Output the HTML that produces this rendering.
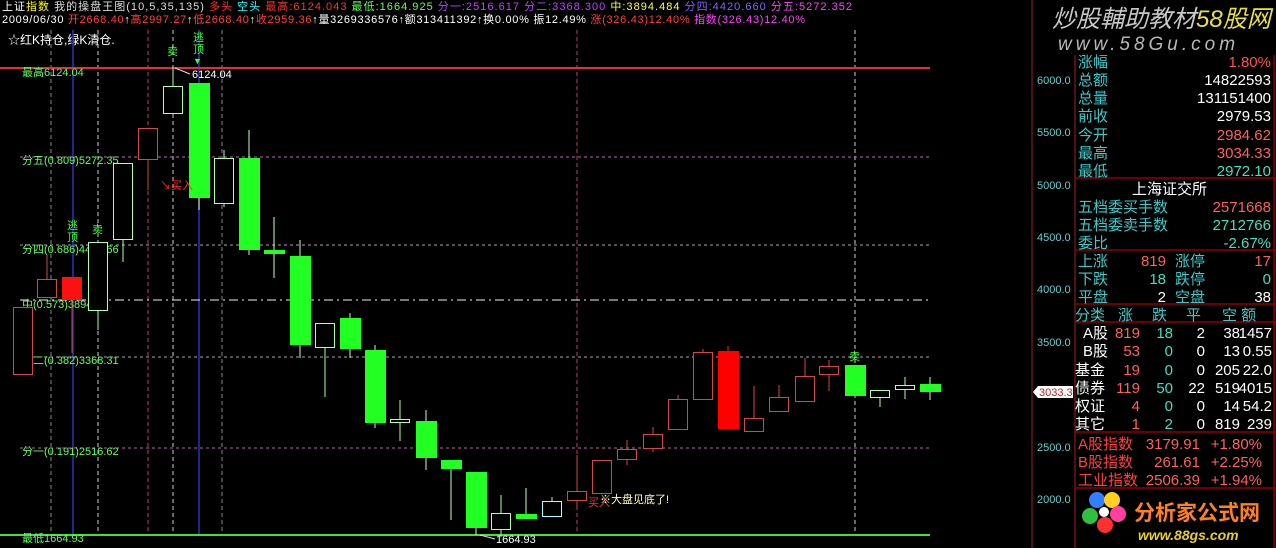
<!DOCTYPE html>
<html><head><meta charset="utf-8"><style>
html,body{margin:0;padding:0;background:#000;width:1276px;height:548px;overflow:hidden}
svg{display:block}
text{font-family:"Liberation Sans","Noto Sans CJK SC",sans-serif}
.s{font-size:11px}
.p{font-size:15px}
</style></head><body>
<svg width="1276" height="548" xmlns="http://www.w3.org/2000/svg">
<rect width="1276" height="548" fill="#000"/>
<text class="s" x="2" y="10" fill="#fff" textLength="850" lengthAdjust="spacing">上证<tspan fill="#ffff00">指数</tspan> <tspan fill="#ddd">我的操盘王图(10,5,35,135)</tspan> <tspan fill="#ff3030">多头</tspan> <tspan fill="#30ffff">空头</tspan> <tspan fill="#ff3030">最高:6124.043</tspan> <tspan fill="#60ff60">最低:1664.925</tspan> <tspan fill="#c040ff">分一:2516.617</tspan> <tspan fill="#c040ff">分二:3368.300</tspan> <tspan fill="#ffff40">中:3894.484</tspan> <tspan fill="#8060ff">分四:4420.660</tspan> <tspan fill="#ff40ff">分五:5272.352</tspan></text>
<text class="s" x="2" y="23" fill="#fff" textLength="803" lengthAdjust="spacing">2009/06/30 <tspan fill="#ff4040">开2668.40</tspan>↑<tspan fill="#ff4040">高2997.27</tspan>↑<tspan fill="#ff4040">低2668.40</tspan>↑<tspan fill="#ff4040">收2959.36</tspan>↑量3269336576↑额313411392↑换0.00% 振12.49% <tspan fill="#ff4040">涨(326.43)12.40%</tspan> <tspan fill="#ff40ff">指数(326.43)12.40%</tspan></text>
<text x="8" y="44" fill="#fff" font-size="12">☆红K持仓,绿K清仓.</text>

<line x1="73" y1="30" x2="73" y2="535" stroke="#3030c0" stroke-width="1.5"/>
<line x1="199" y1="30" x2="199" y2="535" stroke="#3030c0" stroke-width="1.5"/>
<g stroke-dasharray="4,3" stroke-width="1">
<line x1="51" y1="30" x2="51" y2="535" stroke="#888"/>
<line x1="98" y1="30" x2="98" y2="535" stroke="#ccc"/>
<line x1="148" y1="30" x2="148" y2="535" stroke="#c04060"/>
<line x1="173" y1="30" x2="173" y2="535" stroke="#ccc"/>
<line x1="222" y1="30" x2="222" y2="535" stroke="#888"/>
<line x1="577" y1="30" x2="577" y2="535" stroke="#c04060"/>
<line x1="855" y1="30" x2="855" y2="535" stroke="#ccc"/>
</g>
<line x1="0" y1="68" x2="930" y2="68" stroke="#e03030" stroke-width="2"/>
<line x1="0" y1="535" x2="930" y2="535" stroke="#40e040" stroke-width="2"/>
<g stroke-dasharray="3,3" stroke-width="1">
<line x1="20" y1="157" x2="930" y2="157" stroke="#c060c0"/>
<line x1="20" y1="245" x2="930" y2="245" stroke="#b0a0b0"/>
<line x1="20" y1="357" x2="930" y2="357" stroke="#b0a0b0"/>
<line x1="20" y1="448" x2="930" y2="448" stroke="#c060a0"/>
</g>
<line x1="20" y1="300" x2="930" y2="300" stroke="#eee" stroke-dasharray="9,4,2,4"/>
<g class="s" fill="#60ff60">
<text x="22" y="76">最高6124.04</text>
<text x="22" y="164">分五(0.809)5272.35</text>
<text x="22" y="253">分四(0.686)4420.66</text>
<text x="22" y="308">中(0.573)3894.48</text>
<text x="22" y="364">分二(0.382)3368.31</text>
<text x="22" y="455">分一(0.191)2516.62</text>
<text x="22" y="542">最低1664.93</text>
</g>
<g stroke-width="1">
<g fill="#000" stroke="#d04848">
<rect x="13.5" y="307.5" width="19" height="67"/>
<line x1="47" y1="255" x2="47" y2="279"/><rect x="37.5" y="279.5" width="19" height="18"/>
<line x1="148" y1="159" x2="148" y2="190"/><rect x="138.5" y="128.5" width="19" height="31"/>
<line x1="577" y1="455" x2="577" y2="510"/><rect x="567.5" y="491.5" width="19" height="9"/>
<rect x="592.5" y="460.5" width="19" height="33"/>
<line x1="627" y1="440" x2="627" y2="465"/><rect x="617.5" y="449.5" width="19" height="10"/>
<line x1="653" y1="427" x2="653" y2="452"/><rect x="643.5" y="434.5" width="19" height="14"/>
<line x1="678" y1="395" x2="678" y2="399"/><rect x="668.5" y="399.5" width="19" height="30"/>
<line x1="703" y1="349" x2="703" y2="352"/><rect x="693.5" y="352.5" width="19" height="47"/>
<line x1="754" y1="386" x2="754" y2="418"/><rect x="744.5" y="418.5" width="19" height="13"/>
<line x1="779" y1="385" x2="779" y2="397"/><rect x="769.5" y="397.5" width="19" height="14"/>
<line x1="805" y1="358" x2="805" y2="376"/><rect x="795.5" y="376.5" width="19" height="25"/>
<line x1="829" y1="360" x2="829" y2="391"/><rect x="819.5" y="366.5" width="19" height="8"/>
</g>
<line x1="72" y1="300" x2="72" y2="353" stroke="#d04848"/>
<rect x="62" y="277" width="20" height="23" fill="#ff1010"/>
<line x1="728" y1="346" x2="728" y2="351" stroke="#ff2020"/>
<rect x="718" y="351" width="21" height="78" fill="#ff0000"/>
<g fill="#000" stroke="#b0ffb0">
<line x1="98" y1="310" x2="98" y2="330"/><rect x="88.5" y="242.5" width="19" height="68"/>
<line x1="123" y1="239" x2="123" y2="262"/><rect x="113.5" y="163.5" width="19" height="76"/>
<line x1="173" y1="67" x2="173" y2="86"/><rect x="163.5" y="86.5" width="19" height="27"/>
<line x1="224" y1="150" x2="224" y2="207"/><rect x="214.5" y="158.5" width="19" height="45"/>
<line x1="325" y1="347" x2="325" y2="397"/><rect x="315.5" y="323.5" width="19" height="24"/>
<line x1="400" y1="400" x2="400" y2="441"/><rect x="390.5" y="419.5" width="19" height="3"/>
<line x1="501" y1="495" x2="501" y2="537"/><rect x="491.5" y="513.5" width="19" height="16"/>
<line x1="552" y1="497" x2="552" y2="501"/><rect x="542.5" y="501.5" width="19" height="15" stroke="#b0ffff"/>
<line x1="880" y1="397" x2="880" y2="407"/><rect x="870.5" y="390.5" width="19" height="7"/>
<line x1="905" y1="377" x2="905" y2="399"/><rect x="895.5" y="385.5" width="19" height="4"/>
</g>
<g stroke="#c8ffc8">
<line x1="199" y1="198" x2="199" y2="210"/>
<line x1="249" y1="130" x2="249" y2="255"/>
<line x1="274" y1="217" x2="274" y2="278"/>
<line x1="300" y1="240" x2="300" y2="358"/>
<line x1="350" y1="313" x2="350" y2="358"/>
<line x1="375" y1="345" x2="375" y2="428"/>
<line x1="426" y1="410" x2="426" y2="470"/>
<line x1="451" y1="469" x2="451" y2="520"/>
<line x1="476" y1="528" x2="476" y2="535"/>
<line x1="526" y1="488" x2="526" y2="514"/>
<line x1="930" y1="377" x2="930" y2="400"/>
</g>
<g fill="#22ff22">
<rect x="189" y="83" width="21" height="115"/>
<rect x="239" y="158" width="21" height="92"/>
<rect x="264" y="250" width="21" height="4"/>
<rect x="290" y="256" width="21" height="89"/>
<rect x="340" y="318" width="21" height="31"/>
<rect x="365" y="350" width="21" height="73"/>
<rect x="416" y="421" width="21" height="37"/>
<rect x="441" y="460" width="21" height="9"/>
<rect x="466" y="472" width="21" height="56"/>
<rect x="516" y="514" width="21" height="5"/>
<rect x="845" y="365" width="21" height="31"/>
<rect x="920" y="384" width="21" height="8"/>
</g>
</g>
<g class="s" fill="#40ff40">
<text x="67" y="229">逃</text><text x="67" y="241">顶</text>
<text x="92" y="233">卖</text>
<text x="167" y="55">卖</text>
<text x="193" y="41">逃</text><text x="193" y="53">顶</text>
<text x="193" y="64" font-size="9">▼</text>
<text x="849" y="360">卖</text>
</g>
<line x1="175" y1="68" x2="190" y2="74" stroke="#ddd"/>
<text class="s" x="192" y="78" fill="#fff">6124.04</text>
<line x1="480" y1="535" x2="495" y2="539" stroke="#ddd"/>
<text class="s" x="496" y="543" fill="#fff">1664.93</text>
<text class="s" x="160" y="189" fill="#ff3030">↘买入</text>
<text class="s" x="588" y="506" fill="#ff3030">买入</text>
<text class="s" x="600" y="503" fill="#ffffc0">※大盘见底了!</text>

<line x1="1032" y1="0" x2="1032" y2="548" stroke="#a02020"/>
<line x1="1075" y1="55" x2="1075" y2="548" stroke="#a02020"/>
<g class="s" fill="#60d0d0">
<text x="1037" y="84">6000.0</text>
<text x="1037" y="136">5500.0</text>
<text x="1037" y="189">5000.0</text>
<text x="1037" y="241">4500.0</text>
<text x="1037" y="293">4000.0</text>
<text x="1037" y="346">3500.0</text>
<text x="1037" y="451">2500.0</text>
<text x="1037" y="503">2000.0</text>
</g>
<polygon points="1033,392 1038,386 1073,386 1073,398 1038,398" fill="#fff"/>
<text class="s" x="1039" y="396" fill="#c02020">3033.3</text>

<text x="1052" y="27" font-size="24" font-style="italic" fill="#c8c8c8">炒股輔助教材<tspan fill="#e8e040">58股网</tspan></text>
<text x="1058" y="50" font-size="19" font-style="italic" fill="#b8b8b8" letter-spacing="4">www.58Gu.com</text>

<g stroke="#900000" stroke-width="1.5">
<line x1="1075" y1="178" x2="1276" y2="178"/>
<line x1="1075" y1="250" x2="1276" y2="250"/>
<line x1="1075" y1="304" x2="1276" y2="304"/>
<line x1="1075" y1="322" x2="1276" y2="322"/>
<line x1="1075" y1="432" x2="1276" y2="432"/>
<line x1="1075" y1="488" x2="1276" y2="488"/>
<line x1="1274" y1="55" x2="1274" y2="548"/>
</g>
<g class="p" fill="#40c8c8">
<text x="1078" y="67">涨幅</text>
<text x="1078" y="85">总额</text>
<text x="1078" y="103">总量</text>
<text x="1078" y="121">前收</text>
<text x="1078" y="140">今开</text>
<text x="1078" y="158">最高</text>
<text x="1078" y="176">最低</text>
<text x="1078" y="212">五档委买手数</text>
<text x="1078" y="230">五档委卖手数</text>
<text x="1078" y="248">委比</text>
<text x="1078" y="266">上涨</text>
<text x="1078" y="284">下跌</text>
<text x="1078" y="302">平盘</text>
<text x="1175" y="266">涨停</text>
<text x="1175" y="284">跌停</text>
<text x="1175" y="302">空盘</text>
<text x="1075" y="320">分类</text>
<text x="1118" y="320">涨</text>
<text x="1152" y="320">跌</text>
<text x="1186" y="320">平</text>
<text x="1222" y="320">空 额</text>
</g>
<g class="p" text-anchor="end">
<text x="1271" y="67" fill="#ff5050">1.80%</text>
<text x="1271" y="85" fill="#fff">14822593</text>
<text x="1271" y="103" fill="#fff">131151400</text>
<text x="1271" y="121" fill="#fff">2979.53</text>
<text x="1271" y="140" fill="#ff6060">2984.62</text>
<text x="1271" y="158" fill="#ff6060">3034.33</text>
<text x="1271" y="176" fill="#40e0c0">2972.10</text>
<text x="1271" y="212" fill="#ff6060">2571668</text>
<text x="1271" y="230" fill="#40e0c0">2712766</text>
<text x="1271" y="248" fill="#40e0c0">-2.67%</text>
<text x="1166" y="266" fill="#ff6060">819</text>
<text x="1166" y="284" fill="#40e0c0">18</text>
<text x="1166" y="302" fill="#fff">2</text>
<text x="1271" y="266" fill="#ff6060">17</text>
<text x="1271" y="284" fill="#40e0c0">0</text>
<text x="1271" y="302" fill="#fff">38</text>
</g>
<g class="p" fill="#fff">
<text x="1132" y="194">上海证交所</text>
<text x="1083" y="338">A股</text>
<text x="1083" y="356">B股</text>
<text x="1075" y="375">基金</text>
<text x="1075" y="393">债券</text>
<text x="1075" y="411">权证</text>
<text x="1075" y="429">其它</text>
</g>
<g class="p" text-anchor="end">
<g fill="#ff6060"><text x="1140" y="338">819</text><text x="1140" y="356">53</text><text x="1140" y="375">19</text><text x="1140" y="393">119</text><text x="1140" y="411">4</text><text x="1140" y="429">1</text></g>
<g fill="#40e0c0"><text x="1173" y="338">18</text><text x="1173" y="356">0</text><text x="1173" y="375">0</text><text x="1173" y="393">50</text><text x="1173" y="411">0</text><text x="1173" y="429">2</text></g>
<g fill="#fff"><text x="1205" y="338">2</text><text x="1205" y="356">0</text><text x="1205" y="375">0</text><text x="1205" y="393">22</text><text x="1205" y="411">0</text><text x="1205" y="429">0</text>
<text x="1240" y="338">38</text><text x="1240" y="356">13</text><text x="1240" y="375">205</text><text x="1240" y="393">519</text><text x="1240" y="411">14</text><text x="1240" y="429">819</text>
<text x="1272" y="338">1457</text><text x="1272" y="356">0.55</text><text x="1272" y="375">22.0</text><text x="1272" y="393">4015</text><text x="1272" y="411">54.2</text><text x="1272" y="429">239</text></g>
</g>
<g class="p" fill="#ff4040">
<text x="1078" y="449">A股指数</text>
<text x="1078" y="467">B股指数</text>
<text x="1078" y="485">工业指数</text>
</g>
<g class="p" text-anchor="end" fill="#ff6060">
<text x="1200" y="449">3179.91</text><text x="1200" y="467">261.61</text><text x="1200" y="485">2506.39</text>
<text x="1262" y="449">+1.80%</text><text x="1262" y="467">+2.25%</text><text x="1262" y="485">+1.94%</text>
</g>
<g>
<circle cx="1097" cy="500" r="8" fill="#3080ff"/>
<circle cx="1112" cy="500" r="8" fill="#ffd020"/>
<circle cx="1118" cy="514" r="8" fill="#ff40a0"/>
<circle cx="1105" cy="525" r="8" fill="#ff3030"/>
<circle cx="1090" cy="516" r="8" fill="#30c040"/>
<circle cx="1104" cy="512" r="5" fill="#fff"/>
</g>
<text x="1134" y="520" font-size="21" font-weight="bold" fill="#ff8020">分析家公式网</text>
<text x="1138" y="540" font-size="14" font-weight="bold" font-style="italic" fill="#e8d020">www.88gs.com</text>
</svg>
</body></html>
